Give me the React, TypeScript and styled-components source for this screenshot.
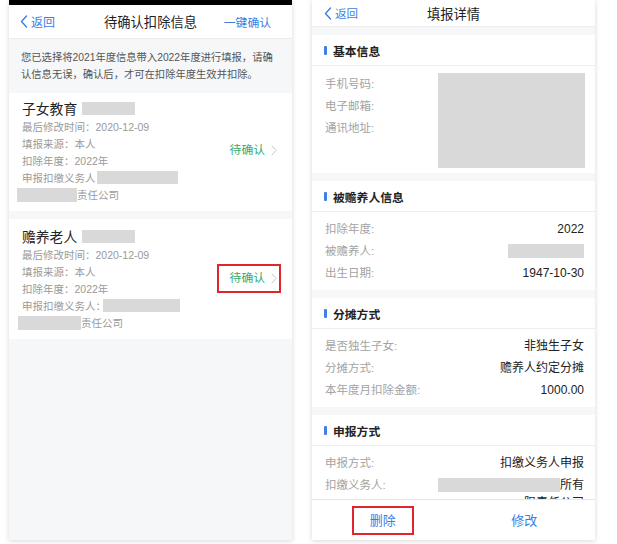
import React from 'react';
import styled, { createGlobalStyle } from 'styled-components';

const Global = createGlobalStyle`
  html, body { margin: 0; padding: 0; background: #fff; }
  body { font-family: "Liberation Sans", "Noto Sans CJK SC", sans-serif; -webkit-font-smoothing: antialiased; }
  * { box-sizing: border-box; }
`;

const BLUE = '#3a7ee4';
const GREEN = '#35a96c';
const RED = '#e0262c';

const Stage = styled.div`
  display: flex;
  gap: 20px;
  padding-left: 9px;
  width: 617px;
  height: 544px;
  overflow: hidden;
`;

const Phone = styled.div`
  width: 283px;
  height: 540px;
  display: flex;
  flex-direction: column;
  background: #f6f7f9;
  box-shadow: 0 1px 5px rgba(0, 0, 0, 0.16);
  overflow: hidden;
`;

const StatusBar = styled.div`
  height: 5px;
  flex-shrink: 0;
  background: #000;
`;

const NavBar = styled.div<{ $h: number; $pad: number }>`
  height: ${p => p.$h}px;
  flex-shrink: 0;
  background: #fff;
  border-bottom: 1px solid #ececec;
  display: grid;
  grid-template-columns: 1fr auto 1fr;
  align-items: center;
  padding: 0 ${p => p.$pad}px;
`;

const Back = styled.div<{ $size: number }>`
  display: flex;
  align-items: center;
  gap: 3px;
  color: ${BLUE};
  font-size: ${p => p.$size}px;
  justify-self: start;
`;

const NavTitle = styled.div`
  font-size: 13.3px;
  color: #222;
`;

const NavAction = styled.div`
  justify-self: end;
  margin-right: 10px;
  color: ${BLUE};
  font-size: 11.8px;
`;

const Notice = styled.div`
  flex-shrink: 0;
  padding: 10px 12px 8px 12px;
  font-size: 10.3px;
  line-height: 17px;
  color: #555;
  white-space: nowrap;
`;

const CardList = styled.div`
  display: flex;
  flex-direction: column;
  gap: 8px;
  margin-top: 2px;
`;

const Card = styled.div<{ $top: number }>`
  background: #fff;
  display: flex;
  align-items: center;
  padding: ${p => p.$top}px 11px 8px 13px;
`;

const CardBody = styled.div`
  flex: 1;
  display: flex;
  flex-direction: column;
`;

const CardTitle = styled.div`
  display: flex;
  align-items: center;
  height: 20px;
  font-size: 13.8px;
  color: #222;
`;

const Detail = styled.div`
  display: flex;
  align-items: center;
  height: 17px;
  font-size: 10.5px;
  color: #9a9a9a;
  white-space: nowrap;
`;

const Redact = styled.span<{ $w: number; $h: number; $ml?: number }>`
  display: inline-block;
  width: ${p => p.$w}px;
  height: ${p => p.$h}px;
  margin-left: ${p => p.$ml ?? 0}px;
  background: #d9d9d9;
  flex-shrink: 0;
`;

const Status = styled.div<{ $boxed?: boolean }>`
  display: flex;
  align-items: center;
  gap: 6px;
  padding: 6px 2px 6px 11px;
  border: 2px solid ${p => (p.$boxed ? RED : 'transparent')};
  color: ${GREEN};
  font-size: 11.8px;
  line-height: 13px;
`;

const Scroll = styled.div`
  flex: 1;
  min-height: 0;
  overflow: hidden;
  display: flex;
  flex-direction: column;
  gap: 8px;
  padding-top: 8px;
`;

const Section = styled.div`
  background: #fff;
  flex-shrink: 0;
`;

const SectionHead = styled.div`
  height: 31px;
  display: flex;
  align-items: center;
  gap: 6px;
  padding-left: 12px;
  border-bottom: 1px solid #efefef;
  font-size: 11.8px;
  font-weight: 700;
  color: #222;
`;

const Bar = styled.span`
  width: 3px;
  height: 9px;
  border-radius: 1px;
  background: #3f7fe8;
`;

const SectionBody = styled.div<{ $top?: number; $bottom?: number }>`
  padding: ${p => p.$top ?? 6}px 11px ${p => p.$bottom ?? 6}px 13px;
`;

const BasicBody = styled.div`
  display: flex;
  justify-content: space-between;
  padding: 7px 10px 5px 13px;
`;

const LabelCol = styled.div`
  display: flex;
  flex-direction: column;
`;

const Row = styled.div`
  display: flex;
  justify-content: space-between;
  align-items: flex-start;
  line-height: 22px;
`;

const Label = styled.span`
  font-size: 11.5px;
  line-height: 22px;
  color: #a3a3a3;
  white-space: nowrap;
`;

const Value = styled.span`
  font-size: 12px;
  color: #222;
  display: flex;
  align-items: center;
  height: 22px;
  white-space: nowrap;
`;

const ValueCol = styled.div`
  display: flex;
  flex-direction: column;
  align-items: flex-end;
`;

const ValueTail = styled.span`
  font-size: 12px;
  line-height: 14px;
  color: #222;
`;

const BottomBar = styled.div`
  height: 41px;
  flex-shrink: 0;
  background: #fff;
  border-top: 1px solid #e6e6e6;
  display: flex;
`;

const BarButton = styled.div`
  flex: 1;
  display: flex;
  align-items: center;
  justify-content: center;
`;

const BarLabel = styled.span<{ $boxed?: boolean }>`
  color: ${BLUE};
  font-size: 13px;
  line-height: 15px;
  padding: 5px 16px;
  border: 2px solid ${p => (p.$boxed ? RED : 'transparent')};
`;

const ChevronLeft = () => (
  <svg width="8" height="13" viewBox="0 0 8 13">
    <path d="M6.5 1 L1.5 6.5 L6.5 12" fill="none" stroke={BLUE} strokeWidth="1.4" strokeLinecap="round" strokeLinejoin="round" />
  </svg>
);

const ChevronRight = () => (
  <svg width="6" height="11" viewBox="0 0 6 11">
    <path d="M1 1 L5 5.5 L1 10" fill="none" stroke="#c8c8c8" strokeWidth="1" strokeLinecap="round" strokeLinejoin="round" />
  </svg>
);

type CardProps = {
  title: string;
  top: number;
  boxed?: boolean;
  r1: number;
  r1ml: number;
  r2: number;
  r2ml: number;
};

const ItemCard = ({ title, top, boxed, r1, r1ml, r2, r2ml }: CardProps) => (
  <Card $top={top}>
    <CardBody>
      <CardTitle>
        {title}
        <Redact $w={53} $h={13} $ml={5} />
      </CardTitle>
      <Detail>最后修改时间：2020-12-09</Detail>
      <Detail>填报来源：本人</Detail>
      <Detail>扣除年度：2022年</Detail>
      <Detail>
        申报扣缴义务人：
        <Redact $w={r1} $h={13} $ml={r1ml} />
      </Detail>
      <Detail>
        <Redact $w={r2} $h={14} $ml={r2ml} />
        责任公司
      </Detail>
    </CardBody>
    <Status $boxed={boxed}>
      待确认
      <ChevronRight />
    </Status>
  </Card>
);

export default function App() {
  return (
    <>
      <Global />
      <Stage>
        <Phone>
          <StatusBar />
          <NavBar $h={34} $pad={11}>
            <Back $size={12}>
              <ChevronLeft />
              返回
            </Back>
            <NavTitle>待确认扣除信息</NavTitle>
            <NavAction>一键确认</NavAction>
          </NavBar>
          <Notice>
            <div>您已选择将2021年度信息带入2022年度进行填报，请确</div>
            <div>认信息无误，确认后，才可在扣除年度生效并扣除。</div>
          </Notice>
          <CardList>
            <ItemCard title="子女教育" top={5} r1={81} r1ml={-9} r2={60} r2ml={-5} />
            <ItemCard title="赡养老人" top={7} boxed r1={77} r1ml={-3} r2={63} r2ml={-4} />
          </CardList>
        </Phone>

        <Phone>
          <NavBar $h={27} $pad={12}>
            <Back $size={11.5}>
              <ChevronLeft />
              返回
            </Back>
            <NavTitle>填报详情</NavTitle>
            <span />
          </NavBar>
          <Scroll>
            <Section>
              <SectionHead>
                <Bar />
                基本信息
              </SectionHead>
              <BasicBody>
                <LabelCol>
                  <Label>手机号码:</Label>
                  <Label>电子邮箱:</Label>
                  <Label>通讯地址:</Label>
                </LabelCol>
                <Redact $w={147} $h={95} />
              </BasicBody>
            </Section>

            <Section>
              <SectionHead>
                <Bar />
                被赡养人信息
              </SectionHead>
              <SectionBody>
                <Row>
                  <Label>扣除年度:</Label>
                  <Value>2022</Value>
                </Row>
                <Row>
                  <Label>被赡养人:</Label>
                  <Value>
                    <Redact $w={76} $h={14} />
                  </Value>
                </Row>
                <Row>
                  <Label>出生日期:</Label>
                  <Value>1947-10-30</Value>
                </Row>
              </SectionBody>
            </Section>

            <Section>
              <SectionHead>
                <Bar />
                分摊方式
              </SectionHead>
              <SectionBody>
                <Row>
                  <Label>是否独生子女:</Label>
                  <Value>非独生子女</Value>
                </Row>
                <Row>
                  <Label>分摊方式:</Label>
                  <Value>赡养人约定分摊</Value>
                </Row>
                <Row>
                  <Label>本年度月扣除金额:</Label>
                  <Value>1000.00</Value>
                </Row>
              </SectionBody>
            </Section>

            <Section>
              <SectionHead>
                <Bar />
                申报方式
              </SectionHead>
              <SectionBody>
                <Row>
                  <Label>申报方式:</Label>
                  <Value>扣缴义务人申报</Value>
                </Row>
                <Row>
                  <Label>扣缴义务人:</Label>
                  <ValueCol>
                    <Value>
                      <Redact $w={122} $h={14} />
                      所有
                    </Value>
                    <ValueTail>限责任公司</ValueTail>
                  </ValueCol>
                </Row>
              </SectionBody>
            </Section>
          </Scroll>
          <BottomBar>
            <BarButton>
              <BarLabel $boxed>删除</BarLabel>
            </BarButton>
            <BarButton>
              <BarLabel>修改</BarLabel>
            </BarButton>
          </BottomBar>
        </Phone>
      </Stage>
    </>
  );
}
